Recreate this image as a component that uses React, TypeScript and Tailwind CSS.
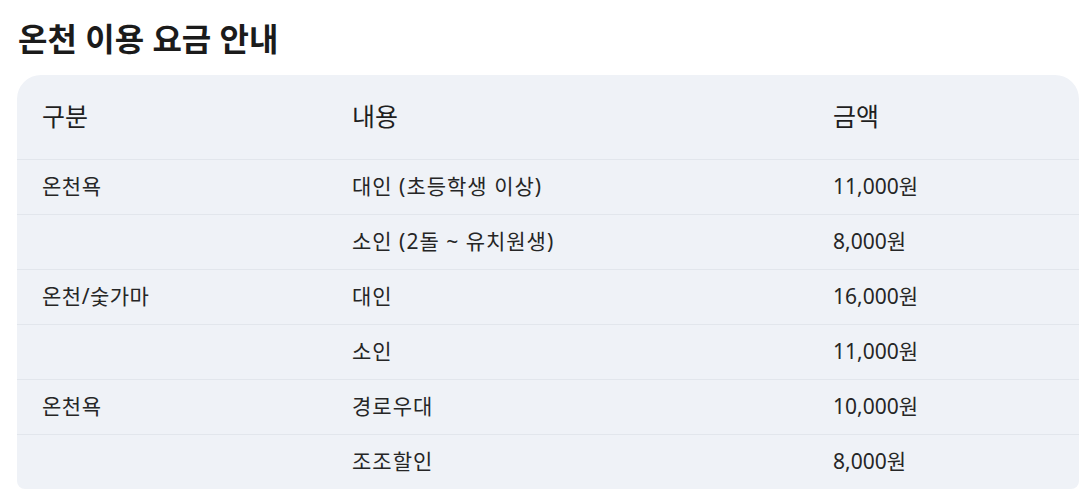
const rows = [
  { type: "온천욕", desc: "대인 (초등학생 이상)", price: "11,000원" },
  { type: "", desc: "소인 (2돌 ~ 유치원생)", price: "8,000원" },
  { type: "온천/숯가마", desc: "대인", price: "16,000원" },
  { type: "", desc: "소인", price: "11,000원" },
  { type: "온천욕", desc: "경로우대", price: "10,000원" },
  { type: "", desc: "조조할인", price: "8,000원" },
];

export default function App() {
  return (
    <div
      className="bg-white text-[#1f1f1f] pl-[17px] pr-[3px] pt-[19px]"
      style={{ fontFamily: '"Noto Sans", "Noto Sans CJK KR", sans-serif' }}
    >
      <h1 className="text-[32px] font-bold leading-[40px] pl-px text-[#1b1b1b]">온천 이용 요금 안내</h1>
      <div className="mt-[16px] bg-[#eff2f7] rounded-t-[24px] rounded-b-[8px] overflow-hidden">
        <table className="w-full border-collapse table-fixed">
          <colgroup>
            <col className="w-[310px]" />
            <col className="w-[481px]" />
            <col />
          </colgroup>
          <thead>
            <tr className="h-[84px] text-[25px]">
              <th className="text-left font-normal px-[25px] pb-px leading-[30px]">구분</th>
              <th className="text-left font-normal px-[25px] pb-px leading-[30px]">내용</th>
              <th className="text-left font-normal px-[25px] pb-px leading-[30px]">금액</th>
            </tr>
          </thead>
          <tbody>
            {rows.map((r, i) => (
              <tr key={i} className="h-[55px] border-t border-[#e2e6ec] text-[21px] leading-[26px] text-[#262626]">
                <td className="px-[25px] pb-px tracking-[0.5px]">{r.type}</td>
                <td className="px-[25px] pb-px tracking-[1px]">{r.desc}</td>
                <td className="px-[25px] pb-px">{r.price}</td>
              </tr>
            ))}
          </tbody>
        </table>
      </div>
    </div>
  );
}
